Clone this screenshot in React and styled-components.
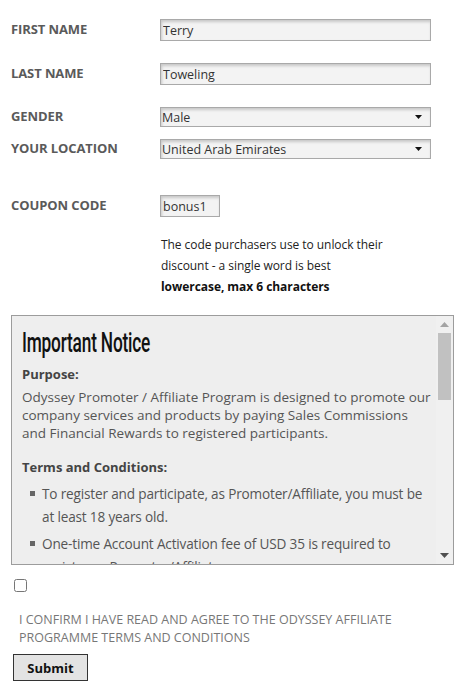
import React from "react";
import styled, { createGlobalStyle } from "styled-components";

const GlobalStyle = createGlobalStyle`
    body {
        margin: 0;
        background: #fff;
        font-family: "Open Sans", "Noto Sans", sans-serif;
        color: #333;
    }
`;

function Caret() {
    return (
        <svg width="7" height="4" viewBox="0 0 7 4">
            <path d="M0 0h7L3.5 4z" fill="#111" />
        </svg>
    );
}

function ScrollArrow({ up }) {
    return (
        <svg width="9" height="5" viewBox="0 0 9 5">
            <path d={up ? "M0 5h9L4.5 0z" : "M0 0h9L4.5 5z"} fill={up ? "#a3a3a3" : "#505050"} />
        </svg>
    );
}

function SelectField({ value }) {
    return (
        <SelectBox>
            <Select defaultValue={value}>
                <option>{value}</option>
            </Select>
            <Caret />
        </SelectBox>
    );
}

export default function App() {
    return (
        <Page>
            <GlobalStyle />
            <Row $top={19}>
                <Label>FIRST NAME</Label>
                <TextInput defaultValue="Terry" />
            </Row>
            <Row $top={22}>
                <Label>LAST NAME</Label>
                <TextInput defaultValue="Toweling" />
            </Row>
            <Row $top={22}>
                <Label>GENDER</Label>
                <SelectField value="Male" />
            </Row>
            <Row $top={12}>
                <Label>YOUR LOCATION</Label>
                <SelectField value="United Arab Emirates" />
            </Row>
            <Row $top={36}>
                <Label>COUPON CODE</Label>
                <TextInput defaultValue="bonus1" $width={60} />
            </Row>
            <Help>
                The code purchasers use to unlock their
                <br />
                discount - a single word is best
                <br />
                <strong>lowercase, max 6 characters</strong>
            </Help>

            <Notice>
                <NoticeBody>
                    <Heading>Important Notice</Heading>
                    <SubHead>Purpose:</SubHead>
                    <Para>
                        Odyssey Promoter / Affiliate Program is designed to promote our company
                        services and products by paying Sales Commissions and Financial Rewards
                        to registered participants.
                    </Para>
                    <SubHead $top={16}>Terms and Conditions:</SubHead>
                    <List>
                        <Item>
                            To register and participate, as Promoter/Affiliate, you must be at
                            least 18 years old.
                        </Item>
                        <Item>
                            One-time Account Activation fee of USD 35 is required to register as
                            Promoter/Affiliate.
                        </Item>
                    </List>
                </NoticeBody>
                <ScrollTrack>
                    <ScrollButton>
                        <ScrollArrow up />
                    </ScrollButton>
                    <ScrollThumb />
                    <ScrollRest />
                    <ScrollButton>
                        <ScrollArrow />
                    </ScrollButton>
                </ScrollTrack>
            </Notice>

            <Checkbox type="checkbox" />
            <Confirm>
                I CONFIRM I HAVE READ AND AGREE TO THE ODYSSEY AFFILIATE
                <br />
                PROGRAMME TERMS AND CONDITIONS
            </Confirm>
            <SubmitButton>Submit</SubmitButton>
        </Page>
    );
}

const Page = styled.div`
    width: 463px;
    height: 688px;
    overflow: hidden;
    box-sizing: border-box;
    padding: 0 9px 0 11px;
`;

const Row = styled.div`
    display: grid;
    grid-template-columns: 149px 1fr;
    align-items: center;
    margin-top: ${(p) => p.$top}px;
`;

const Label = styled.div`
    font-size: 13px;
    font-weight: 700;
    color: #5a5a5a;
    margin-top: -2px;
    letter-spacing: -0.1px;
`;

const fieldLook = `
    box-sizing: border-box;
    border: 1px solid #a9a9a9;
    background: #f3f3f3;
    box-shadow: inset 1px 2px 3px rgba(0, 0, 0, 0.18);
    font-family: "Open Sans", "Noto Sans", sans-serif;
    font-size: 12.5px;
    color: #333;
`;

const TextInput = styled.input`
    ${fieldLook}
    width: ${(p) => p.$width || 271}px;
    height: 22px;
    padding: 0 0 0 2px;
    outline: none;
`;

const SelectBox = styled.div`
    ${fieldLook}
    width: 271px;
    height: 20px;
    display: flex;
    align-items: center;
    padding-right: 8px;
`;

const Select = styled.select`
    flex: 1;
    appearance: none;
    border: none;
    background: transparent;
    font: inherit;
    color: inherit;
    padding: 0 0 0 1px;
    outline: none;
`;

const Help = styled.p`
    margin: 17px 0 0 150px;
    font-size: 12px;
    line-height: 21px;
    color: #222;
    letter-spacing: -0.05px;

    strong {
        font-weight: 700;
        color: #111;
    }
`;

const Notice = styled.div`
    margin-top: 18px;
    width: 443px;
    height: 250px;
    box-sizing: border-box;
    border: 1px solid #9c9c9c;
    background: #eeeeee;
    display: flex;
`;

const NoticeBody = styled.div`
    flex: 1;
    overflow: hidden;
    padding: 10px 0 0 10px;
`;

const Heading = styled.h2`
    margin: 0;
    font-family: Roboto, "Liberation Sans", sans-serif;
    font-weight: 500;
    font-size: 27px;
    line-height: 34px;
    letter-spacing: -0.3px;
    color: #111;
    white-space: nowrap;
    transform: scaleX(0.64);
    transform-origin: left;
`;

const SubHead = styled.div`
    margin-top: ${(p) => p.$top || 5}px;
    font-size: 13px;
    font-weight: 700;
    color: #444;
    line-height: 18px;
`;

const Para = styled.p`
    margin: 5px 0 0;
    padding-right: 4px;
    font-size: 13.5px;
    line-height: 18px;
    color: #555;
`;

const List = styled.ul`
    list-style: none;
    margin: 6px 0 0;
    padding: 0 12px 0 8px;
`;

const Item = styled.li`
    display: flex;
    gap: 7px;
    font-size: 13.6px;
    line-height: 23px;
    color: #555;
    letter-spacing: -0.17px;
    margin-bottom: 4px;

    &::before {
        content: "";
        flex: none;
        width: 5px;
        height: 5px;
        margin-top: 9px;
        background: #666;
    }
`;

const ScrollTrack = styled.div`
    width: 17px;
    display: flex;
    flex-direction: column;
    background: #f0f0f0;
`;

const ScrollButton = styled.div`
    height: 17px;
    display: flex;
    align-items: center;
    justify-content: center;
`;

const ScrollThumb = styled.div`
    height: 67px;
    margin: 0 2px;
    background: #c1c1c1;
`;

const ScrollRest = styled.div`
    flex: 1;
`;

const Checkbox = styled.input`
    display: block;
    width: 13px;
    height: 13px;
    margin: 14px 0 0 3px;
`;

const Confirm = styled.p`
    margin: 19px 0 0 8px;
    font-size: 12.5px;
    line-height: 18px;
    color: #777;
`;

const SubmitButton = styled.button`
    display: block;
    margin: 7px 0 0 2px;
    width: 75px;
    height: 27px;
    border: 1px solid #333;
    background: #e3e3e3;
    font-family: "Open Sans", "Noto Sans", sans-serif;
    font-size: 13px;
    font-weight: 700;
    color: #111;
    padding: 0;
`;
